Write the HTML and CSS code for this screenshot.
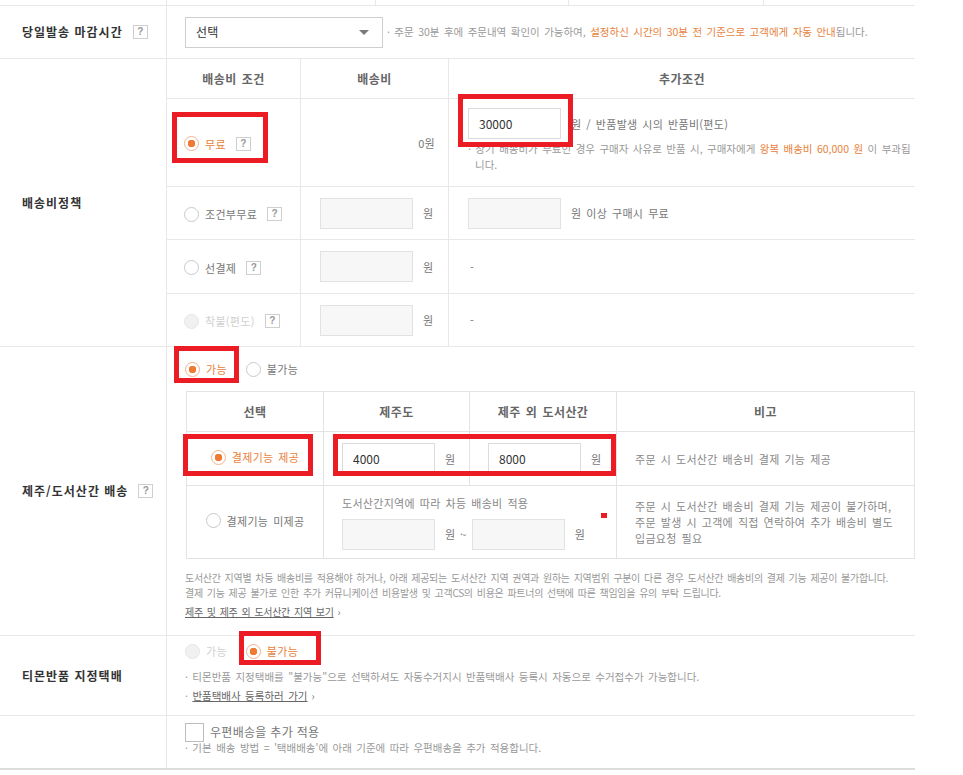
FILE: index.html
```html
<!DOCTYPE html>
<html lang="ko">
<head>
    <meta charset="UTF-8">
    <meta name="viewport" content="width=device-width, initial-scale=1.0">
    <title>배송정보</title>
    <link rel="stylesheet" href="styles.css">
</head>
<body>
<div class="page">
    <div class="prev-row">
        <div class="pc pc1"></div>
        <div class="pc pc2"></div>
        <div class="pc pc3"></div>
        <div class="pc pc4"></div>
    </div>

    <div class="row row-cutoff">
        <div class="label">당일발송 마감시간<span class="help">?</span></div>
        <div class="field">
            <div class="select">선택<span class="caret"></span></div>
            <p class="note">· 주문 30분 후에 주문내역 확인이 가능하여, <em>설정하신 시간의 30분 전 기준으로 고객에게 자동 안내</em>됩니다.</p>
        </div>
    </div>

    <div class="row row-fee">
        <div class="label">배송비정책</div>
        <div class="field">
            <table class="fee-table">
                <thead>
                    <tr><th class="f1">배송비 조건</th><th class="f2">배송비</th><th>추가조건</th></tr>
                </thead>
                <tbody>
                    <tr class="fr1">
                        <td class="cond"><span class="radio on"><i></i>무료</span><span class="help">?</span></td>
                        <td class="num">0원</td>
                        <td class="extra top">
                            <div class="line"><span class="box filled">30000</span><span class="unit">원 / 반품발생 시의 반품비(편도)</span></div>
                            <p class="note hang">· 상기 배송비가 무료인 경우 구매자 사유로 반품 시, 구매자에게 <em>왕복 배송비 60,000 원</em> 이 부과됩니다.</p>
                        </td>
                    </tr>
                    <tr class="fr2">
                        <td class="cond"><span class="radio"><i></i>조건부무료</span><span class="help">?</span></td>
                        <td class="cost"><span class="box"></span><span class="unit">원</span></td>
                        <td class="extra"><span class="box"></span><span class="unit">원 이상 구매시 무료</span></td>
                    </tr>
                    <tr class="fr3">
                        <td class="cond"><span class="radio"><i></i>선결제</span><span class="help">?</span></td>
                        <td class="cost"><span class="box"></span><span class="unit">원</span></td>
                        <td class="extra dash">-</td>
                    </tr>
                    <tr class="fr4">
                        <td class="cond"><span class="radio off"><i></i>착불(편도)</span><span class="help">?</span></td>
                        <td class="cost"><span class="box"></span><span class="unit">원</span></td>
                        <td class="extra dash">-</td>
                    </tr>
                </tbody>
            </table>
        </div>
    </div>

    <div class="row row-jeju">
        <div class="label">제주/도서산간 배송<span class="help">?</span></div>
        <div class="field">
            <div class="radios"><span class="radio on"><i></i>가능</span><span class="radio"><i></i>불가능</span></div>
            <table class="jeju-table">
                <thead>
                    <tr><th class="j1">선택</th><th class="j2">제주도</th><th class="j3">제주 외 도서산간</th><th>비고</th></tr>
                </thead>
                <tbody>
                    <tr class="jr1">
                        <td class="center"><span class="radio on"><i></i>결제기능 제공</span></td>
                        <td><span class="box filled">4000</span><span class="unit">원</span></td>
                        <td><span class="box filled">8000</span><span class="unit">원</span></td>
                        <td class="memo">주문 시 도서산간 배송비 결제 기능 제공</td>
                    </tr>
                    <tr class="jr2">
                        <td class="center"><span class="radio"><i></i>결제기능 미제공</span></td>
                        <td colspan="2">
                            <p class="sub">도서산간지역에 따라 차등 배송비 적용</p>
                            <div class="line"><span class="box"></span><span class="unit">원 ~</span><span class="box second"></span><span class="unit">원</span></div>
                        </td>
                        <td class="memo">주문 시 도서산간 배송비 결제 기능 제공이 불가하며,<br>주문 발생 시 고객에 직접 연락하여 추가 배송비 별도<br>입금요청 필요</td>
                    </tr>
                </tbody>
            </table>
            <div class="jeju-notes">
                <p class="note note-sm">도서산간 지역별 차등 배송비를 적용해야 하거나, 아래 제공되는 도서산간 지역 권역과 원하는 지역범위 구분이 다른 경우 도서산간 배송비의 결제 기능 제공이 불가합니다.</p>
                <p class="note note-sm">결제 기능 제공 불가로 인한 추가 커뮤니케이션 비용발생 및 고객CS의 비용은 파트너의 선택에 따른 책임임을 유의 부탁 드립니다.</p>
                <p class="note note-sm link"><a href="#">제주 및 제주 외 도서산간 지역 보기</a><span class="chev">›</span></p>
            </div>
        </div>
    </div>

    <div class="row row-tmon">
        <div class="label">티몬반품 지정택배</div>
        <div class="field">
            <div class="radios"><span class="radio off"><i></i>가능</span><span class="radio on"><i></i>불가능</span></div>
            <p class="note">· 티몬반품 지정택배를 "불가능"으로 선택하셔도 자동수거지시 반품택배사 등록시 자동으로 수거접수가 가능합니다.</p>
            <p class="note link">· <a href="#">반품택배사 등록하러 가기</a><span class="chev">›</span></p>
        </div>
    </div>

    <div class="row row-post">
        <div class="label"></div>
        <div class="field">
            <div class="check"><i></i>우편배송을 추가 적용</div>
            <p class="note">· 기본 배송 방법 = '택배배송'에 아래 기준에 따라 우편배송을 추가 적용합니다.</p>
        </div>
    </div>

    <!-- red guide boxes drawn over the form -->
    <div class="mark mark-free"></div>
    <div class="mark mark-refund"></div>
    <div class="mark mark-jeju-on"></div>
    <div class="mark mark-pay"></div>
    <div class="mark mark-cost"></div>
    <div class="mark mark-tmon"></div>
    <div class="mark mark-dot"></div>
</div>
</body>
</html>
```

FILE: styles.css
```css
* {
    box-sizing: border-box;
}

body {
    margin: 0;
    background: #fff;
    font-family: "Noto Sans CJK KR", "Noto Sans", sans-serif;
    font-size: 11px;
    line-height: 16px;
    color: #777;
    letter-spacing: 0.3px;
    word-spacing: 1.5px;
}

p {
    margin: 0;
}

em {
    font-style: normal;
    color: #e8823c;
}

.page {
    position: relative;
    width: 915px;
}

/* bottom edge of the table above */
.prev-row {
    display: flex;
    height: 6px;
    border-bottom: 1px solid #e8e8e8;
}

.pc {
    height: 5px;
    border-right: 1px solid #e8e8e8;
}

.pc1 { width: 167px; }
.pc2 { width: 209px; }
.pc3 { width: 193px; }
.pc4 { width: 195px; }

.row {
    display: grid;
    grid-template-columns: 167px 1fr;
    border-bottom: 1px solid #e8e8e8;
}

.label {
    display: flex;
    align-items: center;
    padding-left: 22px;
    border-right: 1px solid #e8e8e8;
    font-size: 12px;
    font-weight: bold;
    color: #333;
    letter-spacing: 1px;
    word-spacing: 0;
}

.field {
    padding-left: 18px;
}

.row-cutoff { height: 53px; }
.row-fee { height: 288px; }
.row-jeju { height: 289px; }
.row-tmon { height: 80px; }

.row-post {
    height: 54px;
    border-bottom: 2px solid #dcdcdc;
}

.help {
    display: inline-block;
    width: 15px;
    height: 14px;
    margin-left: 10px;
    border: 1px solid #cfcfcf;
    font-family: "Liberation Sans", Arial, sans-serif;
    font-size: 10px;
    line-height: 12px;
    font-weight: bold;
    color: #999;
    text-align: center;
    letter-spacing: 0;
}

.note {
    font-size: 10.5px;
    letter-spacing: 0;
    line-height: 16px;
    color: #999;
}

.note-sm {
    font-size: 10px;
    letter-spacing: -0.3px;
    line-height: 15px;
}

.link a {
    color: #666;
}

.chev {
    margin-left: 4px;
    color: #777;
}

/* 당일발송 */
.row-cutoff .field {
    display: flex;
    align-items: center;
}

.select {
    display: flex;
    align-items: center;
    justify-content: space-between;
    width: 198px;
    height: 31px;
    padding: 0 13px 0 10px;
    border: 1px solid #cfcfcf;
    font-size: 12px;
    color: #333;
}

.caret {
    width: 0;
    height: 0;
    border-left: 5px solid transparent;
    border-right: 5px solid transparent;
    border-top: 5px solid #7a7a7a;
}

.row-cutoff .note {
    margin-left: 4px;
}

/* form controls */
.radio {
    display: inline-flex;
    align-items: center;
    color: #777;
}

.radio i {
    width: 15px;
    height: 15px;
    margin-right: 6px;
    border: 1px solid #c9c9c9;
    border-radius: 50%;
    background: #fff;
}

.radio.on {
    color: #e8823c;
}

.radio.on i {
    border-color: #f2b38e;
    background: radial-gradient(circle, #ef7a34 3.5px, #fff 4px);
}

.radio.off {
    color: #cfcfcf;
}

.radio.off i {
    border-color: #e6e6e6;
    background: #f1f1f1;
}

.radios {
    display: flex;
    align-items: center;
    gap: 19px;
    height: 20px;
}

.box {
    display: inline-block;
    vertical-align: middle;
    width: 93px;
    height: 31px;
    border: 1px solid #e2e2e2;
    background: #f7f7f7;
}

.box.filled {
    padding-left: 10px;
    background: #fff;
    border-color: #dcdcdc;
    font-size: 12px;
    line-height: 29px;
    color: #333;
    letter-spacing: 0;
    word-spacing: 0;
}

.unit {
    margin-left: 10px;
    vertical-align: middle;
    color: #777;
}

.line {
    display: flex;
    align-items: center;
}

/* 배송비정책 */
.row-fee .field {
    padding: 0;
}

.fee-table,
.jeju-table {
    border-spacing: 0;
    table-layout: fixed;
}

.fee-table {
    width: 748px;
}

.fee-table th,
.fee-table td {
    padding: 0;
    border-bottom: 1px solid #e8e8e8;
    vertical-align: middle;
    text-align: left;
}

.fee-table th + th,
.fee-table td + td {
    border-left: 1px solid #e8e8e8;
}

.fee-table tr:last-child td {
    border-bottom: 0;
}

.fee-table th,
.jeju-table th {
    height: 40px;
    font-size: 12px;
    color: #666;
    text-align: center;
    letter-spacing: 0.4px;
}

.f1 { width: 133px; }
.f2 { width: 148px; }

.fee-table .cond {
    padding-left: 17px;
}

.cond .help {
    margin-left: 10px;
    vertical-align: middle;
}

.cond .radio {
    vertical-align: middle;
}

.fee-table .num {
    padding-right: 13px;
    text-align: right;
    color: #777;
}

.fee-table .cost,
.fee-table .extra {
    padding-left: 19px;
}

.fee-table .top {
    vertical-align: top;
    padding-top: 9px;
}

.fee-table .dash {
    padding-left: 21px;
}

.hang {
    margin-top: 2px;
    padding: 0 2px 0 7px;
    text-indent: -7px;
}

.fr1 td { height: 88px; }
.fr2 td { height: 53px; }
.fr3 td { height: 54px; }
.fr4 td { height: 52px; }

/* 제주/도서산간 */
.row-jeju .field {
    padding-top: 12px;
}

.jeju-table {
    width: 729px;
    margin: 12px 0 0 1px;
    border: 1px solid #e3e3e3;
}

.jeju-table th,
.jeju-table td {
    padding: 0 0 0 18px;
    border-bottom: 1px solid #e3e3e3;
    vertical-align: middle;
    text-align: left;
}

.jeju-table th {
    padding: 0;
    text-align: center;
}

.jeju-table th + th,
.jeju-table td + td {
    border-left: 1px solid #e3e3e3;
}

.jeju-table tr:last-child td {
    border-bottom: 0;
}

.j1 { width: 136px; }
.j2 { width: 146px; }
.j3 { width: 147px; }

.jr1 td { height: 54px; }
.jr2 td { height: 72px; }

.jeju-table td.center {
    padding: 0;
    text-align: center;
}

.memo {
    color: #888;
}

.sub {
    margin-bottom: 8px;
    color: #888;
}

.box.second {
    margin-left: 5px;
}

.jeju-notes {
    margin-top: 11px;
}

.jeju-notes .link {
    margin-top: 4px;
    line-height: 16px;
}

/* 티몬반품 */
.row-tmon .field {
    padding-top: 5px;
}

.row-tmon .radios + .note {
    margin-top: 8px;
}

.row-tmon .link {
    margin-top: 3px;
}

/* 우편배송 */
.row-post .field {
    padding-top: 6px;
}

.check {
    display: flex;
    align-items: center;
    height: 20px;
    font-size: 12px;
    color: #777;
    word-spacing: 0;
}

.check i {
    width: 19px;
    height: 19px;
    margin-right: 6px;
    border: 1px solid #bdbdbd;
}

.row-post .note {
    margin-top: -2px;
}

/* red guide boxes */
.mark {
    position: absolute;
    border: 5px solid #ec1c24;
}

.mark-free { left: 172px; top: 112px; width: 96px; height: 51px; }
.mark-refund { left: 458px; top: 94px; width: 115px; height: 53px; }
.mark-jeju-on { left: 174px; top: 346px; width: 65px; height: 37px; }
.mark-pay { left: 183px; top: 434px; width: 130px; height: 42px; }
.mark-cost { left: 333px; top: 434px; width: 283px; height: 42px; }
.mark-tmon { left: 239px; top: 631px; width: 82px; height: 34px; }

.mark-dot {
    left: 601px;
    top: 513px;
    width: 6px;
    height: 5px;
    border: 0;
    background: #ec1c24;
}
```
